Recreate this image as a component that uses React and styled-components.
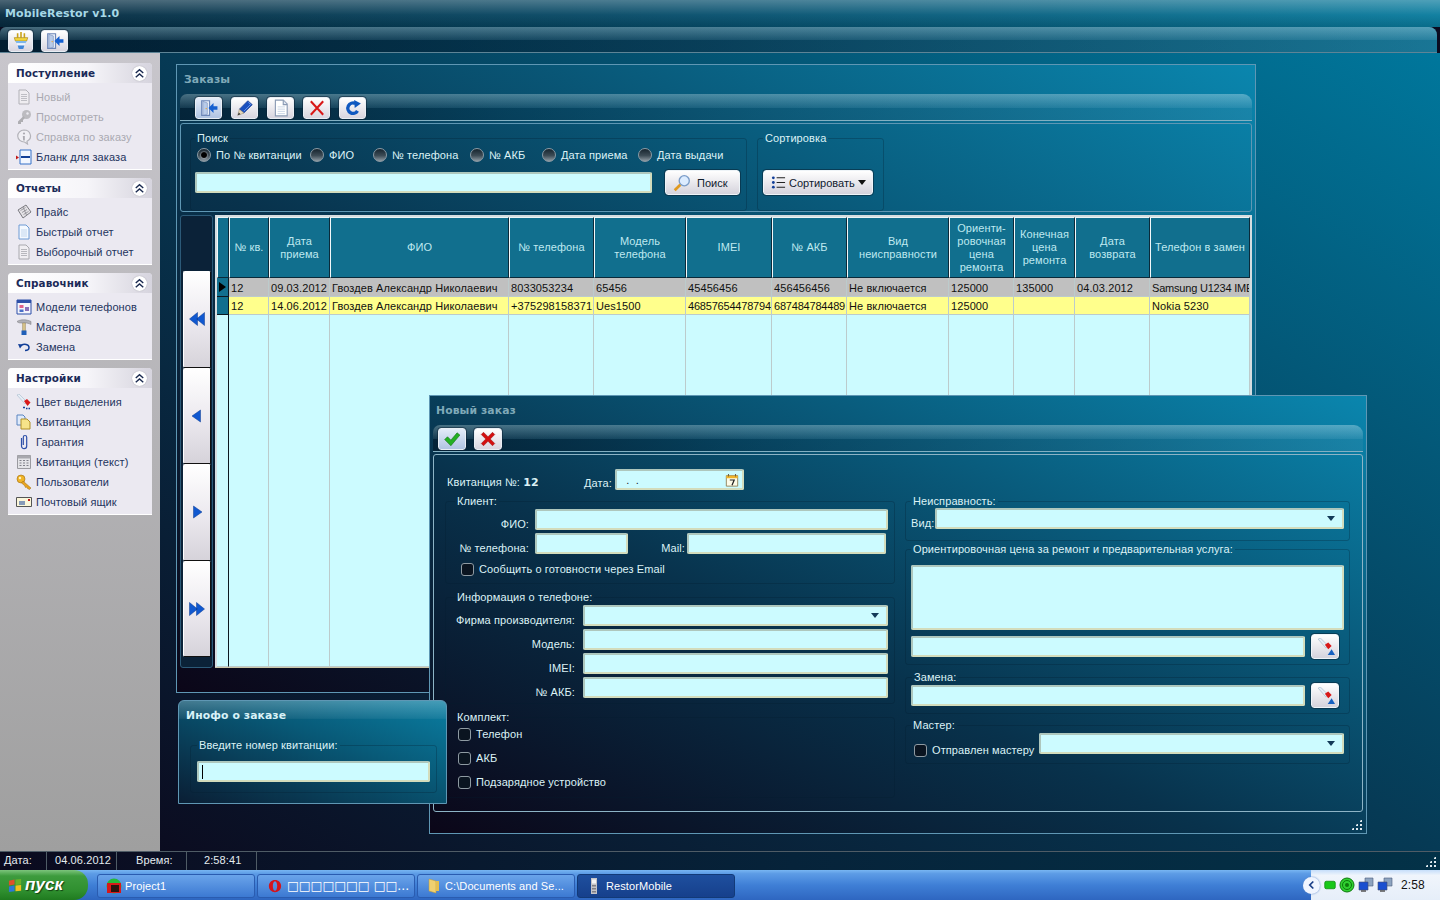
import React from "react";
import styled, { createGlobalStyle } from "styled-components";

const BODY_FONT = `"Liberation Sans", Arial, sans-serif`;
const BOLD_FONT = `"DejaVu Sans", Verdana, sans-serif`;

const GlobalStyle = createGlobalStyle`
  html, body { margin: 0; padding: 0; background: #0b0c20; }
  body { font: 11px/14px ${BODY_FONT}; letter-spacing: 0.1px; }
  * { box-sizing: border-box; }
`;

const glyphs = {
  plug: (
    <>
      <path d="M5 1v4M8 0v5M11 1v4" stroke="#c9a21a" strokeWidth="1.4" />
      <path d="M2 5h12l-1 3H3z" fill="#f2d53c" stroke="#a8861a" strokeWidth=".6" />
      <path d="M3 8h10l-1 2H4z" fill="#7fb6ea" />
      <path d="M4 10h8l-1 2H5z" fill="#eef6ff" />
      <path d="M5 12h6l-1 3H6z" fill="#3f86d8" />
    </>
  ),
  door: (
    <>
      <path d="M1.5 1.5h7v13h-7z" fill="#e8eef8" stroke="#6c86b8" />
      <path d="M2.5 2l4 1.500v10l-4 1z" fill="#b9cbe8" stroke="#6c86b8" strokeWidth=".5" />
      <circle cx="5.500" cy="8.500" r=".6" fill="#f0a020" />
      <path d="M15.500 6.500h-3.500V3.500L7.500 8l4.500 4.500V9.500h3.500z" fill="#1560d0" />
    </>
  ),
  pencil: (
    <>
      <path d="M10.500 1.500l4 3.500-7.500 7.500-4-3.500z" fill="#1a50c0" stroke="#0c2e80" strokeWidth=".5" />
      <path d="M3 9l4 3.500-5.500 2z" fill="#e8d8b8" stroke="#8a7a60" strokeWidth=".4" />
      <path d="M1.500 14.500l1-2.500 1.500 1.500z" fill="#333" />
      <path d="M11 3l2 1.800-6 6" stroke="#7ea6f0" fill="none" strokeWidth=".7" />
    </>
  ),
  page: (
    <>
      <path d="M3 1h7l3.500 3.500V15H3z" fill="#fff" stroke="#8a9ab4" />
      <path d="M10 1v4h3.500" fill="#dfe6f2" stroke="#8a9ab4" />
      <path d="M5 7h6.500M5 9h6.500M5 11h6.500M5 13h6.500" stroke="#c6d2e4" strokeWidth=".8" />
    </>
  ),
  cross: <path d="M2.500 2l11 12M13.500 2l-11 12" stroke="#d81818" strokeWidth="1.800" fill="none" />,
  boldCross: (
    <path d="M2 4l2-2 4 4 4-4 2 2-4 4 4 4-2 2-4-4-4 4-2-2 4-4z" fill="#d40f0f" stroke="#8a0808" strokeWidth=".4" />
  ),
  check: (
    <path d="M1.500 8.500l2.500-2.500 3 3 5.500-6.500 2.500 2-8 9.500z" fill="#23b023" stroke="#0c6a0c" strokeWidth=".5" />
  ),
  refresh: (
    <>
      <path d="M12 10.500A4.600 4.600 0 1 1 10 4" stroke="#0f58c0" strokeWidth="3" fill="none" />
      <path d="M9 .8l6 3.200-5.500 4z" fill="#0f58c0" />
    </>
  ),
  docGray: (
    <>
      <path d="M3 1h7l3 3v11H3z" fill="#f0eef2" stroke="#a8a8ae" />
      <path d="M5 5.500h6M5 7.500h6M5 9.500h6M5 11.500h6" stroke="#a8a8ae" strokeWidth=".8" />
    </>
  ),
  key: (
    <>
      <circle cx="10.500" cy="5.500" r="4.500" fill="#b4b4b8" />
      <circle cx="11.500" cy="4.500" r="1.200" fill="#ecebf1" />
      <path d="M7.500 7L2 12.500V15h3v-2h2v-2l2-2z" fill="#a4a4a8" />
    </>
  ),
  info: (
    <>
      <path d="M8 1a6.500 6 0 0 1 3 11.300L11.500 15 8.500 13A6.500 6 0 1 1 8 1z" fill="#f2f1f5" stroke="#aaaab0" strokeWidth="1.200" />
      <circle cx="8" cy="4.500" r="1.100" fill="#a0a0a6" />
      <path d="M6.800 7h2v4.500h-1.600z" fill="#a0a0a6" />
    </>
  ),
  form: (
    <>
      <path d="M4 1h11v14H4z" fill="#f2f6ff" stroke="#3470c8" />
      <path d="M5 7h9v2H5z" fill="#123f98" />
      <path d="M0 6.500l3 2-3 2z" fill="#c01818" />
    </>
  ),
  price: (
    <>
      <path d="M2 6l8-5 5 7-8 6z" fill="#e4e2e6" stroke="#7a7a80" />
      <path d="M4.500 6.500l5-3M6 8.500l5-3M7.500 10.500l5-3M7 3l3.500 8" stroke="#8a8a90" strokeWidth=".8" />
    </>
  ),
  docBlue: (
    <>
      <path d="M3 1h7l3 3v11H3z" fill="#f4f9ff" stroke="#6c9ad4" />
      <path d="M5 6h6M5 8h6M5 10h6M5 12h6" stroke="#b6cfea" strokeWidth=".8" />
    </>
  ),
  models: (
    <>
      <path d="M1 1h14v14H1z" fill="#f4f4fb" stroke="#2d4fa8" />
      <path d="M1 1h14v3H1z" fill="#2d4fa8" />
      <path d="M3.500 6h4v3h-4z" fill="#e0608a" />
      <path d="M3.500 10.500h4v2.500h-4z" fill="#4a70c8" />
      <path d="M9 8h4v4H9z" fill="#8a70b8" />
    </>
  ),
  hammer: (
    <>
      <path d="M1 2.500c3-2 9-2.500 14 0v3c-2-1-4-1.500-5-1.500H6C4 4 2 4 1 2.500z" fill="#b0b0b6" stroke="#77777d" strokeWidth=".5" />
      <path d="M6.500 4h3v8h-3z" fill="#d4c088" stroke="#8a7a50" strokeWidth=".4" />
      <path d="M5.500 11.500h5V16h-5z" fill="#1f5fb8" />
    </>
  ),
  undo: (
    <>
      <path d="M5 6.500c3-2 8-1.500 8 2 0 2-2 3-4 3" stroke="#123f98" strokeWidth="1.500" fill="none" />
      <path d="M2 5l5 .5L4 9.500z" fill="#123f98" />
    </>
  ),
  brush: (
    <>
      <path d="M1 1l2-1 8 8-2 2z" fill="#e6eef6" stroke="#9ab0c4" strokeWidth=".5" />
      <path d="M8 7l3-2 3.500 3.500-3 3.500z" fill="#d81818" />
      <path d="M7 13.500h2M10 14.500h1.500M12.500 14.500H14" stroke="#123f98" strokeWidth="1.600" />
    </>
  ),
  brushBlue: (
    <>
      <path d="M1 1l2-1 7 7-2 2z" fill="#e6eef6" stroke="#9ab0c4" strokeWidth=".5" />
      <path d="M7 6l3-2 3 3-3 3z" fill="#d81818" />
      <path d="M9.500 15l3.500-5 3 5z" fill="#1560c0" />
    </>
  ),
  copies: (
    <>
      <path d="M1 1h6l2 2v8H1z" fill="#dfeafa" stroke="#5a84c0" />
      <path d="M5 5h6l3 3v7H5z" fill="#f6e48a" stroke="#b09028" />
    </>
  ),
  clip: (
    <path d="M5.500 4v8a2.600 2.600 0 0 0 5.200 0V3.200a1.700 1.700 0 0 0-3.400 0V11" stroke="#2d4fa8" strokeWidth="1.200" fill="none" />
  ),
  keypad: (
    <>
      <path d="M1.500 1.500h13v13h-13z" fill="#e4e4e8" stroke="#9a9aa0" />
      <path d="M1.500 1.500h13v3h-13z" fill="#a8a8ae" />
      <path d="M3.500 6.500h2M7 6.500h2M10.500 6.500h2M3.500 9h2M7 9h2M10.500 9h2M3.500 11.500h2M7 11.500h2M10.500 11.500h2" stroke="#80808a" />
    </>
  ),
  keys: (
    <>
      <circle cx="5" cy="5" r="4" fill="#f0b428" stroke="#a06c10" strokeWidth=".6" />
      <circle cx="4" cy="4" r="1.200" fill="#fff2c0" />
      <path d="M7 7l8 7-1.500 1.500-2-1-1-1.500-1 .5-1-2-3-2.500z" fill="#e8a420" stroke="#a06c10" strokeWidth=".5" />
    </>
  ),
  mail: (
    <>
      <path d="M.5 3.500h15v9H.5z" fill="#fbf6da" stroke="#555" />
      <path d="M3 8h6M3 10h6" stroke="#123f98" />
      <path d="M12 5h2v2h-2z" fill="#c01818" />
    </>
  ),
  first: <path d="M8.500 1.500v13L.5 8zM15.500 1.500v13L7.500 8z" fill="#1058d0" stroke="#0a3a90" strokeWidth=".5" />,
  prev: <path d="M11.500 2v12L3 8z" fill="#1058d0" stroke="#0a3a90" strokeWidth=".5" />,
  next: <path d="M4.500 2v12L13 8z" fill="#1058d0" stroke="#0a3a90" strokeWidth=".5" />,
  last: <path d="M.5 1.500v13L8.500 8zM7.500 1.500v13L15.500 8z" fill="#1058d0" stroke="#0a3a90" strokeWidth=".5" />,
  search: (
    <>
      <circle cx="10" cy="6" r="4.500" fill="#dcecff" stroke="#7a9cc8" strokeWidth="1.200" />
      <path d="M6.500 9.500L1.500 14.500" stroke="#e09a20" strokeWidth="2.400" />
    </>
  ),
  sort: (
    <>
      <path d="M6 3h9M6 8h9M6 13h9" stroke="#222" strokeWidth="1.100" />
      <circle cx="2.500" cy="3" r="1.500" fill="#123f98" />
      <circle cx="2.500" cy="8" r="1.500" fill="#123f98" />
      <circle cx="2.500" cy="13" r="1.500" fill="#123f98" />
    </>
  ),
  collapse: <path d="M4 7.500L8 4l4 3.500M4 12L8 8.500l4 3.500" stroke="#1a2a50" strokeWidth="1.500" fill="none" />,
  calendar: (
    <>
      <path d="M1.500 3h13v12h-13z" fill="#fdfbe8" stroke="#8a7a50" />
      <path d="M1.500 3h13v3h-13z" fill="#f0b428" />
      <path d="M4 1v3M12 1v3" stroke="#706040" strokeWidth="1.200" />
      <path d="M5.500 8h5L8 14" stroke="#222" strokeWidth="1.400" fill="none" />
    </>
  ),
  flag: (
    <>
      <path d="M1 3l6-1.500V7L1 8z" fill="#e0502a" />
      <path d="M8 1.500l6-.5v6l-6 .5z" fill="#6ab02c" />
      <path d="M1 9l6-1v6l-6 1z" fill="#2d78d8" />
      <path d="M8 8l6-.500v6l-6 .5z" fill="#f0c020" />
    </>
  ),
  okBadge: (
    <>
      <circle cx="8" cy="8" r="7.500" fill="#26b83a" />
      <path d="M1 5h14v10H1z" fill="#d81818" />
      <path d="M5 7h8v7H5z" fill="#2a1410" />
    </>
  ),
  opera: (
    <path fillRule="evenodd" d="M8 1c4 0 7 3 7 7s-3 7-7 7-7-3-7-7 3-7 7-7zm0 1.500c-1.500 0-2.500 2.500-2.500 5.500s1 5.500 2.500 5.500 2.500-2.500 2.500-5.500S9.500 2.500 8 2.500z" fill="#d4141c" />
  ),
  folder: (
    <>
      <path d="M3 1l7 2v12l-7-2z" fill="#f0d070" stroke="#c09a30" strokeWidth=".5" />
      <path d="M10 3h3v10h-3z" fill="#e4be50" />
    </>
  ),
  phone: (
    <>
      <path d="M5 0h6v16H5z" fill="#c4c4c8" />
      <path d="M6 1.500h4v4H6z" fill="#f4f4f4" />
      <path d="M6 7h4v1.500H6zM6 10h4v1.500H6zM6 13h4v1.500H6z" fill="#807f84" />
    </>
  ),
  chevron: <path d="M9.500 4L5.500 8l4 4" stroke="#1a3f88" strokeWidth="2" fill="none" />,
  battery: <rect x="1" y="3" width="14" height="10" rx="2" fill="#18c818" stroke="#0c8a0c" />,
  radar: (
    <>
      <circle cx="8" cy="8" r="7" fill="#30d030" stroke="#0c7a0c" />
      <circle cx="8" cy="8" r="4.500" fill="none" stroke="#0c7a0c" />
      <circle cx="8" cy="8" r="2" fill="#0c7a0c" />
    </>
  ),
  network: (
    <>
      <path d="M7 1h8v8H7z" fill="#8ea4c0" stroke="#4a5a78" strokeWidth=".6" />
      <path d="M1 5h9v8H1z" fill="#1a4fd0" stroke="#444e70" strokeWidth=".6" />
      <path d="M3 14h5" stroke="#555" strokeWidth="1.500" />
    </>
  )
};

const IconSvg = styled.svg`
  display: block;
  flex: none;
  width: ${({ $size }) => $size || 16}px;
  height: ${({ $size }) => $size || 16}px;
  opacity: ${({ $faded }) => ($faded ? 0.85 : 1)};
`;

const Icon = ({ name, size, faded }) => (
  <IconSvg viewBox="0 0 16 16" $size={size} $faded={faded} aria-hidden="true">
    {glyphs[name]}
  </IconSvg>
);

const Screen = styled.div`
  width: 1440px;
  height: 900px;
  display: flex;
  flex-direction: column;
  overflow: hidden;
`;

const TitleBar = styled.div`
  height: 27px;
  flex: none;
  padding: 6px 5px 0;
  font: bold 11px/15px ${BOLD_FONT};
  color: #a6d8e6;
  background:
    linear-gradient(180deg, rgba(255, 255, 255, 0.28) 0, rgba(255, 255, 255, 0.04) 55%, rgba(0, 0, 0, 0.12) 100%),
    linear-gradient(90deg, #062a3f 0%, #07506e 50%, #0a7c9e 100%);
`;

const gloss = `
  linear-gradient(180deg, rgba(175, 225, 240, 0.4) 0, rgba(130, 195, 220, 0.14) 52%, rgba(255, 255, 255, 0) 54%),
  linear-gradient(90deg, rgba(0, 20, 36, 0.55) 0%, rgba(0, 30, 50, 0.3) 30%, rgba(60, 140, 170, 0.3) 100%)
`;

const MainToolbar = styled.div`
  height: 26px;
  flex: none;
  margin-right: 3px;
  padding: 3px 0 0 8px;
  display: flex;
  gap: 8px;
  border-radius: 6px 8px 0 0;
  border-bottom: 1px solid #5e8496;
  background: ${gloss}, linear-gradient(90deg, #04283e 0%, #05405c 50%, #0a6c8c 100%);
`;

const Workspace = styled.div`
  flex: 1;
  min-height: 0;
  display: flex;
`;

const Sidebar = styled.nav`
  width: 160px;
  flex: none;
  padding: 10px 8px;
  display: flex;
  flex-direction: column;
  gap: 8px;
  background: linear-gradient(180deg, #c8c6cc 0%, #9f9f9f 100%);
`;

const SidePanel = styled.section`
  background: #ebe9f1;
  border-bottom: 1px solid #fff;
  border-radius: 4px 4px 0 0;
  padding-bottom: 2px;
`;

const SideHead = styled.header`
  height: 20px;
  padding: 0 5px 0 8px;
  display: flex;
  align-items: center;
  justify-content: space-between;
  font: bold 10.4px/15px ${BOLD_FONT};
  color: #1b2a58;
  border-radius: 4px 4px 0 0;
  background: linear-gradient(90deg, #fff 0%, #f6f5f9 55%, #d6d4de 100%);
`;

const CollapseDot = styled.span`
  width: 15px;
  height: 15px;
  border-radius: 50%;
  background: #fff;
  box-shadow: 0 0 1px #8a8a96;
`;

const SideList = styled.ul`
  list-style: none;
  margin: 0;
  padding: 4px 0 0 8px;
`;

const SideItem = styled.li`
  height: 20px;
  display: flex;
  align-items: center;
  gap: 4px;
  color: ${({ $off }) => ($off ? "#aaa9b2" : "#24345e")};
`;

const Desk = styled.main`
  flex: 1;
  position: relative;
  background: linear-gradient(to top right, #0b0c20 0%, #063a55 50%, #00779c 100%);
`;

const windowBg = `linear-gradient(to top right, #0b0618 0%, #08324c 42%, #0a86ae 100%)`;

const Win = styled.section`
  position: absolute;
  left: ${({ $x }) => $x}px;
  top: ${({ $y }) => $y}px;
  width: ${({ $w }) => $w}px;
  height: ${({ $h }) => $h}px;
  z-index: ${({ $z }) => $z || 1};
  display: flex;
  flex-direction: column;
  border: 1px solid #5f97b4;
  color: #dcf2f6;
  background: ${windowBg};
`;

const WinTitle = styled.h2`
  margin: 0;
  height: 29px;
  flex: none;
  padding: 8px 7px 0 ${({ $pl }) => $pl ?? 7}px;
  font: bold 10.8px/14px ${BOLD_FONT};
  color: #7fa9b8;
`;

const WinBar = styled.div`
  height: 27px;
  flex: none;
  margin: 0 3px;
  padding: 3px 0 0 ${({ $pad }) => $pad}px;
  display: flex;
  gap: ${({ $gap }) => $gap}px;
  border-radius: 7px 9px 0 0;
  border-bottom: 1px solid #83b0c2;
  background: ${gloss};
`;

const ToolButton = styled.button`
  width: ${({ $w }) => $w || 27}px;
  height: 22px;
  padding: 0;
  display: flex;
  align-items: center;
  justify-content: center;
  border: 1px solid #e8eef4;
  border-radius: 3px;
  outline: 1px solid rgba(10, 30, 50, 0.5);
  background: ${({ $active }) =>
    $active
      ? "linear-gradient(180deg, #e4ecf8, #b0c4e2)"
      : "linear-gradient(180deg, #fff, #d8d5df)"};
`;

const SearchPanel = styled.div`
  height: 89px;
  flex: none;
  margin: 2px 3px 0;
  padding: 7px 0 0 9px;
  display: flex;
  gap: 10px;
  border: 1px solid #5f97b4;
  border-radius: 3px;
`;

const Group = styled.fieldset`
  margin: ${({ $mt }) => $mt || 0}px 0 0 ${({ $ml }) => $ml || 0}px;
  padding: 0 6px ${({ $pb }) => $pb || 0}px ${({ $pl }) => $pl ?? 5}px;
  min-width: 0;
  width: ${({ $w }) => ($w ? `${$w}px` : "auto")};
  flex: none;
  border: 1px solid rgba(3, 30, 48, 0.28);
  border-radius: 3px;
`;

const Legend = styled.legend`
  margin-left: ${({ $ml }) => $ml || 0}px;
  padding: 0 2px;
  line-height: 14px;
  color: #dcf2f6;
`;

const RadioRow = styled.div`
  height: 17px;
  margin: 1px 0 0 2px;
  display: flex;
  align-items: center;
`;

const RadioItem = styled.label`
  width: ${({ $w }) => $w}px;
  display: flex;
  align-items: center;
  gap: 5px;
  flex: none;
  white-space: nowrap;
`;

const RadioDot = styled.span`
  width: 14px;
  height: 14px;
  flex: none;
  border-radius: 50%;
  display: flex;
  align-items: center;
  justify-content: center;
  border: 1px solid #8b9aa4;
  background: linear-gradient(180deg, #16242e 0%, #3d4c56 55%, #8e9aa2 100%);

  &::after {
    content: "";
    width: ${({ $on }) => ($on ? 6 : 0)}px;
    height: ${({ $on }) => ($on ? 6 : 0)}px;
    border-radius: 50%;
    background: #000;
    box-shadow: 0 0 2px #fff;
  }
`;

const Field = styled.div`
  width: ${({ $w }) => ($w ? `${$w}px` : "auto")};
  height: ${({ $h }) => $h || 21}px;
  flex: none;
  display: flex;
  align-items: center;
  justify-content: space-between;
  padding: 0 3px;
  color: #123;
  background: #ccfbff;
  border: 2px solid;
  border-color: #aec7bd #d3dcbc #d3dcbc #aec7bd;
  border-radius: 2px;
`;

const DropArrow = styled.span`
  margin-left: auto;
  margin-right: 4px;
  width: 0;
  height: 0;
  border: 4px solid transparent;
  border-top: 5px solid #123a58;
  border-bottom: 0;
`;

const SearchRow = styled.div`
  margin-top: 7px;
  display: flex;
  align-items: center;
  gap: 13px;
`;

const PlainButton = styled.button`
  width: ${({ $w }) => $w}px;
  height: 25px;
  flex: none;
  padding: 0 0 0 ${({ $pl }) => $pl ?? 7}px;
  display: flex;
  align-items: center;
  gap: ${({ $gap }) => $gap}px;
  font: 11px/14px ${BODY_FONT};
  color: #10202e;
  border: 1px solid #eef4f8;
  border-radius: 3px;
  outline: 1px solid rgba(8, 40, 60, 0.6);
  background: linear-gradient(180deg, #fff, #d5d3dc);
`;

const MenuCaret = styled.span`
  width: 0;
  height: 0;
  border: 4px solid transparent;
  border-top: 5px solid #111;
  border-bottom: 0;
`;

const ListArea = styled.div`
  height: 453px;
  flex: none;
  margin: 3px 3px 0;
  display: flex;
  gap: 2px;
`;

const NavColumn = styled.div`
  width: 33px;
  flex: none;
  padding: 55px 0 0 2px;
  border: 1px solid #2c5a78;
  border-radius: 3px;
  background: #0b2238;
`;

const NavButton = styled.button`
  width: 28px;
  height: 96.5px;
  padding: 0;
  display: flex;
  align-items: center;
  justify-content: center;
  border: 1px solid #fff;
  border-right-color: #111;
  border-bottom-color: #111;
  border-radius: 2px;
  background: linear-gradient(180deg, #fff 0%, #ebe8ee 55%, #d6d3da 100%);
`;

const DataGrid = styled.div`
  width: 1037px;
  flex: none;
  padding: 2px 2px 0 2px;
  display: grid;
  grid-template-columns: 12px 40px 61px 179px 85px 92px 86px 75px 102px 65px 61px 75px 100px;
  grid-template-rows: 61px 19px 18px 1fr;
  background: #d6dde0;
  border-bottom: 1px solid #ccc6a8;
`;

const HeadCell = styled.div`
  display: flex;
  align-items: center;
  justify-content: center;
  text-align: center;
  line-height: 13px;
  overflow: hidden;
  color: #bfe9f0;
  background: #116f8e;
  border: 1px solid #0a2a3a;
  border-top-color: #eaf4f6;
  border-left-color: #f2f8fa;
`;

const rowColors = { gray: "#c0c0c0", yellow: "#ffff8c", empty: "#ccfbff" };

const Cell = styled.div`
  padding: ${({ $tone }) => ($tone === "gray" ? 3 : 2)}px 0 0 2px;
  white-space: nowrap;
  overflow: hidden;
  line-height: 14px;
  letter-spacing: ${({ $tight }) => ($tight ? "-0.2px" : "0.1px")};
  color: #111;
  background: ${({ $tone }) => rowColors[$tone]};
  border-right: 1px solid ${({ $strong }) => ($strong ? "#0c1820" : "#bccbcc")};
  border-bottom: 1px solid #bccbcc;
`;

const Marker = styled.div`
  display: flex;
  align-items: center;
  background: #116f8e;
  border-right: 1px solid #0c1820;
  border-bottom: 1px solid #0c1820;

  &::before {
    content: "";
    border: ${({ $on }) => ($on ? "5px" : "0")} solid transparent;
    border-left: ${({ $on }) => ($on ? "7px solid #000" : "0")};
    border-right: 0;
    margin-left: 2px;
  }
`;

const FormBody = styled.div`
  flex: 1;
  min-height: 0;
  margin: 2px 3px 0;
  padding: 14px 11px 0;
  display: flex;
  gap: 10px;
  border: 1px solid #8db4c6;
  border-radius: 3px;
`;

const FormColumn = styled.div`
  width: ${({ $w }) => $w}px;
  flex: none;
  padding-top: ${({ $top }) => $top || 0}px;
`;

const TopRow = styled.div`
  height: 21px;
  display: flex;
  align-items: flex-end;
`;

const TopLabel = styled.span`
  width: ${({ $w }) => $w}px;
  flex: none;
  padding-left: ${({ $pl }) => $pl || 0}px;
  white-space: nowrap;
`;

const ReceiptNumber = styled.b`
  font: bold 11px/14px ${BOLD_FONT};
  color: #dcf2f6;
`;

const FormRow = styled.div`
  margin-top: ${({ $mt }) => $mt || 0}px;
  height: ${({ $h }) => $h || 21}px;
  display: flex;
  align-items: ${({ $align }) => $align || "stretch"};
  gap: ${({ $gap }) => $gap || 0}px;
`;

const RowLabel = styled.span`
  width: ${({ $w }) => $w}px;
  flex: none;
  align-self: flex-end;
  margin-bottom: -1px;
  text-align: right;
  padding-right: ${({ $pr }) => $pr || 0}px;
  white-space: nowrap;
`;

const CheckRow = styled.label`
  margin: ${({ $mt }) => $mt || 0}px 0 0 ${({ $ml }) => $ml || 0}px;
  width: ${({ $w }) => ($w ? `${$w}px` : "auto")};
  flex: none;
  align-self: flex-end;
  height: 14px;
  display: flex;
  align-items: center;
  gap: 5px;
  white-space: nowrap;
`;

const CheckBox = styled.span`
  width: 13px;
  height: 13px;
  flex: none;
  border: 1px solid #8e9aa2;
  border-radius: 3px;
  background: #0a1420;
`;

const Grip = styled.div`
  margin-left: auto;
  width: 11px;
  height: 11px;
  background-image: radial-gradient(circle, #dfe9ee 1px, transparent 1.3px);
  background-size: 4px 4px;
  clip-path: polygon(100% 0, 100% 100%, 0 100%);
`;

const WinFoot = styled.div`
  height: ${({ $h }) => ($h ? `${$h}px` : "auto")};
  flex: ${({ $h }) => ($h ? "none" : "1")};
  display: flex;
  align-items: flex-end;
  padding: 0 4px 3px 0;
`;

const InfoWin = styled(Win)`
  border-radius: 6px 6px 0 0;
  background:
    linear-gradient(180deg, rgba(255, 255, 255, 0.24) 0, rgba(255, 255, 255, 0.06) 17%, transparent 18%),
    linear-gradient(to top right, #0a1e34 0%, #085a78 60%, #0a7ea2 100%);
`;

const InfoTitle = styled(WinTitle)`
  color: #d8f2f8;
`;

const Caret = styled.span`
  width: 1px;
  height: 14px;
  background: #000;
`;

const StatusBar = styled.footer`
  height: 19px;
  flex: none;
  display: flex;
  color: #e4ecf0;
  border-top: 1px solid #4f5c66;
  background: linear-gradient(90deg, #0b0a1e 0%, #06233a 55%, #033248 100%);
`;

const StatusCell = styled.div`
  width: ${({ $w }) => $w}px;
  flex: none;
  padding: 1px 0 0 ${({ $pl }) => $pl}px;
  border-right: 1px solid #4f5c66;
`;

const TaskBar = styled.div`
  height: 30px;
  flex: none;
  display: flex;
  color: #fff;
  background: linear-gradient(180deg, #78b6f2 0%, #5d9ce6 12%, #3f7fd6 50%, #2e66c0 100%);
`;

const StartButton = styled.div`
  width: 88px;
  flex: none;
  display: flex;
  align-items: center;
  gap: 2px;
  padding-left: 8px;
  margin-right: 9px;
  font: italic bold 17px/20px ${BODY_FONT};
  color: #fff;
  text-shadow: 1px 1px 1px #123f12;
  border-radius: 0 14px 14px 0;
  background: linear-gradient(180deg, #7cc47c 0%, #3d9b3d 20%, #2f8f2f 70%, #1f7a1f 100%);
`;

const TaskList = styled.div`
  display: flex;
  gap: 2px;
  padding-top: 4px;
`;

const TaskButton = styled.div`
  width: 158px;
  height: 24px;
  flex: none;
  display: flex;
  align-items: center;
  gap: ${({ $gap }) => $gap || 3}px;
  padding-left: ${({ $pl }) => $pl || 8}px;
  white-space: nowrap;
  overflow: hidden;
  border: 1px solid ${({ $on }) => ($on ? "#123a78" : "#2a5cb0")};
  border-radius: 3px;
  background: ${({ $on }) =>
    $on
      ? "linear-gradient(180deg, #1e4f9e, #16408c)"
      : "linear-gradient(180deg, #6aa4ea, #3c79d2)"};
`;

const TofuText = styled.span`
  font: 12.5px/16px ${BOLD_FONT};
  letter-spacing: 0;
`;

const Tray = styled.div`
  margin-left: auto;
  width: 129px;
  display: flex;
  align-items: center;
  gap: 3px;
  color: #111;
  background: linear-gradient(180deg, #c6defa 0%, #f0f5fc 18%, #e6eef9 100%);
`;

const TrayChevron = styled.span`
  width: 17px;
  height: 17px;
  margin-left: -8px;
  margin-right: 1px;
  border-radius: 50%;
  display: flex;
  align-items: center;
  justify-content: center;
  background: #f0f5ff;
  box-shadow: 0 0 2px #5a86c8;
`;

const Clock = styled.span`
  margin-left: 5px;
  font-size: 12px;
`;

const sideGroups = [
  {
    title: "Поступление",
    items: [
      ["docGray", "Новый", true],
      ["key", "Просмотреть", true],
      ["info", "Справка по заказу", true],
      ["form", "Бланк для заказа"]
    ]
  },
  {
    title: "Отчеты",
    items: [
      ["price", "Прайс"],
      ["docBlue", "Быстрый отчет"],
      ["docGray", "Выборочный отчет"]
    ]
  },
  {
    title: "Справочник",
    items: [
      ["models", "Модели телефонов"],
      ["hammer", "Мастера"],
      ["undo", "Замена"]
    ]
  },
  {
    title: "Настройки",
    items: [
      ["brush", "Цвет выделения"],
      ["copies", "Квитанция"],
      ["clip", "Гарантия"],
      ["keypad", "Квитанция (текст)"],
      ["keys", "Пользователи"],
      ["mail", "Почтовый ящик"]
    ]
  }
];

const radios = [
  ["По № квитанции", 113, true],
  ["ФИО", 63],
  ["№ телефона", 97],
  ["№ АКБ", 72],
  ["Дата приема", 96],
  ["Дата выдачи", 100]
];

const headers = [
  "№ кв.",
  "Дата приема",
  "ФИО",
  "№ телефона",
  "Модель телефона",
  "IMEI",
  "№ АКБ",
  "Вид неисправности",
  "Ориенти-ровочная цена ремонта",
  "Конечная цена ремонта",
  "Дата возврата",
  "Телефон в замен"
];

const rows = [
  {
    tone: "gray",
    current: true,
    cells: ["12", "09.03.2012", "Гвоздев Александр Николаевич", "8033053234", "65456", "45456456", "456456456", "Не включается", "125000", "135000", "04.03.2012", "Samsung U1234 IME"]
  },
  {
    tone: "yellow",
    cells: ["12", "14.06.2012", "Гвоздев Александр Николаевич", "+375298158371", "Ues1500", "46857654478794", "687484784489", "Не включается", "125000", "", "", "Nokia 5230"]
  }
];

const isTight = text => /^\d{12,}$/.test(text) || text.startsWith("Samsung");

const SideGroup = ({ title, items }) => (
  <SidePanel>
    <SideHead>
      {title}
      <CollapseDot>
        <Icon name="collapse" size={15} />
      </CollapseDot>
    </SideHead>
    <SideList>
      {items.map(([icon, label, off]) => (
        <SideItem key={label} $off={off}>
          <Icon name={icon} faded={off} />
          {label}
        </SideItem>
      ))}
    </SideList>
  </SidePanel>
);

const Check = ({ children, ...rest }) => (
  <CheckRow {...rest}>
    <CheckBox />
    {children}
  </CheckRow>
);

const OrdersWindow = () => (
  <Win $x={16} $y={11} $w={1080} $h={629}>
    <WinTitle>Заказы</WinTitle>
    <WinBar $pad={15} $gap={9}>
      <ToolButton $active><Icon name="door" size={18} /></ToolButton>
      <ToolButton><Icon name="pencil" size={18} /></ToolButton>
      <ToolButton><Icon name="page" size={18} /></ToolButton>
      <ToolButton><Icon name="cross" size={18} /></ToolButton>
      <ToolButton><Icon name="refresh" size={18} /></ToolButton>
    </WinBar>
    <SearchPanel>
      <Group $w={557} $pl={4}>
        <Legend>Поиск</Legend>
        <RadioRow>
          {radios.map(([label, w, on]) => (
            <RadioItem key={label} $w={w}>
              <RadioDot $on={on} />
              {label}
            </RadioItem>
          ))}
        </RadioRow>
        <SearchRow>
          <Field $w={457} />
          <PlainButton $w={75} $gap={6}>
            <Icon name="search" size={18} />
            Поиск
          </PlainButton>
        </SearchRow>
      </Group>
      <Group $w={127}>
        <Legend>Сортировка</Legend>
        <FormRow $h={25} />
        <PlainButton $w={110} $gap={3}>
          <Icon name="sort" size={15} />
          Сортировать
          <MenuCaret />
        </PlainButton>
      </Group>
    </SearchPanel>
    <ListArea>
      <NavColumn>
        {["first", "prev", "next", "last"].map(name => (
          <NavButton key={name}><Icon name={name} size={16} /></NavButton>
        ))}
      </NavColumn>
      <DataGrid>
        <HeadCell />
        {headers.map(title => <HeadCell key={title}>{title}</HeadCell>)}
        {rows.map(row => (
          <React.Fragment key={row.tone}>
            <Marker $on={row.current} />
            {row.cells.map((text, i) => (
              <Cell key={i} $tone={row.tone} $tight={isTight(text)}>{text}</Cell>
            ))}
          </React.Fragment>
        ))}
        <Cell $tone="empty" $strong />
        {headers.map(title => <Cell key={title} $tone="empty" />)}
      </DataGrid>
    </ListArea>
  </Win>
);

const NewOrderWindow = () => (
  <Win $x={269} $y={342} $w={938} $h={439} $z={2}>
    <WinTitle $pl={6}>Новый заказ</WinTitle>
    <WinBar $pad={5} $gap={8}>
      <ToolButton $active $w={28}><Icon name="check" size={18} /></ToolButton>
      <ToolButton $w={28}><Icon name="boldCross" size={18} /></ToolButton>
    </WinBar>
    <FormBody>
      <FormColumn $w={450}>
        <TopRow>
          <TopLabel $w={139} $pl={2}>Квитанция №: <ReceiptNumber>12</ReceiptNumber></TopLabel>
          <TopLabel $w={31}>Дата:</TopLabel>
          <Field $w={129}>
            &nbsp;&nbsp;.&nbsp;&nbsp;.
            <Icon name="calendar" size={14} />
          </Field>
        </TopRow>
        <Group $mt={4} $pl={0} $pb={7}>
          <Legend $ml={9}>Клиент:</Legend>
          <FormRow $mt={1}>
            <RowLabel $w={89} $pr={6}>ФИО:</RowLabel>
            <Field $w={353} />
          </FormRow>
          <FormRow $mt={3}>
            <RowLabel $w={89} $pr={6}>№ телефона:</RowLabel>
            <Field $w={93} />
            <RowLabel $w={59} $pr={2}>Mail:</RowLabel>
            <Field $w={199} />
          </FormRow>
          <Check $mt={8} $ml={15}>Сообщить о готовности через Email</Check>
        </Group>
        <Group $mt={6} $pl={0} $pb={5}>
          <Legend $ml={9}>Информация о телефоне:</Legend>
          <FormRow $mt={1}>
            <RowLabel $w={137} $pr={8}>Фирма производителя:</RowLabel>
            <Field $w={305}><DropArrow /></Field>
          </FormRow>
          {["Модель:", "IMEI:", "№ АКБ:"].map(label => (
            <FormRow key={label} $mt={3}>
              <RowLabel $w={137} $pr={8}>{label}</RowLabel>
              <Field $w={305} />
            </FormRow>
          ))}
        </Group>
        <Group $mt={6} $pl={12} $pb={8}>
          <Legend $ml={-3}>Комплект:</Legend>
          <Check $mt={3}>Телефон</Check>
          <Check $mt={10}>АКБ</Check>
          <Check $mt={10}>Подзарядное устройство</Check>
        </Group>
      </FormColumn>
      <FormColumn $w={445} $top={25}>
        <Group $pb={11}>
          <Legend>Неисправность:</Legend>
          <FormRow>
            <RowLabel $w={24} $pr={2}>Вид:</RowLabel>
            <Field $w={409}><DropArrow /></Field>
          </FormRow>
        </Group>
        <Group $mt={1} $pb={5}>
          <Legend>Ориентировочная цена за ремонт и предварительная услуга:</Legend>
          <FormRow $mt={9} $h={65}>
            <Field $w={433} $h={65} />
          </FormRow>
          <FormRow $mt={4} $h={25} $align="center" $gap={6}>
            <Field $w={394} />
            <PlainButton $w={28} $gap={0} $pl={5}><Icon name="brushBlue" size={18} /></PlainButton>
          </FormRow>
        </Group>
        <Group $mt={5} $pb={5}>
          <Legend $ml={1}>Замена:</Legend>
          <FormRow $mt={-1} $h={25} $align="center" $gap={6}>
            <Field $w={394} />
            <PlainButton $w={28} $gap={0} $pl={5}><Icon name="brushBlue" size={18} /></PlainButton>
          </FormRow>
        </Group>
        <Group $mt={4} $pb={6}>
          <Legend>Мастер:</Legend>
          <FormRow $mt={1} $h={24}>
            <Check $ml={3} $w={125}>Отправлен мастеру</Check>
            <Field $w={305}><DropArrow /></Field>
          </FormRow>
        </Group>
      </FormColumn>
    </FormBody>
    <WinFoot $h={21}>
      <Grip />
    </WinFoot>
  </Win>
);

const InfoWindow = () => (
  <InfoWin $x={18} $y={647} $w={269} $h={104} $z={3}>
    <InfoTitle>Инофо о заказе</InfoTitle>
    <Group $mt={8} $ml={11} $w={247} $pl={6} $pb={10}>
      <Legend>Введите номер квитанции:</Legend>
      <FormRow $mt={9}>
        <Field $w={233}>
          <Caret />
        </Field>
      </FormRow>
    </Group>
  </InfoWin>
);

const App = () => (
  <Screen>
    <GlobalStyle />
    <TitleBar>MobileRestor v1.0</TitleBar>
    <MainToolbar>
      <ToolButton $w={25}><Icon name="plug" size={18} /></ToolButton>
      <ToolButton><Icon name="door" size={18} /></ToolButton>
    </MainToolbar>
    <Workspace>
      <Sidebar>
        {sideGroups.map(group => <SideGroup key={group.title} {...group} />)}
      </Sidebar>
      <Desk>
        <OrdersWindow />
        <NewOrderWindow />
        <InfoWindow />
      </Desk>
    </Workspace>
    <StatusBar>
      <StatusCell $w={47} $pl={4}>Дата:</StatusCell>
      <StatusCell $w={70} $pl={8}>04.06.2012</StatusCell>
      <StatusCell $w={70} $pl={19}>Время:</StatusCell>
      <StatusCell $w={70} $pl={17}>2:58:41</StatusCell>
      <WinFoot><Grip /></WinFoot>
    </StatusBar>
    <TaskBar>
      <StartButton>
        <Icon name="flag" size={15} />
        пуск
      </StartButton>
      <TaskList>
        <TaskButton $pl={8}><Icon name="okBadge" size={16} />Project1</TaskButton>
        <TaskButton $pl={10} $gap={5}><Icon name="opera" size={14} /><TofuText>□□□□□□□ □□...</TofuText></TaskButton>
        <TaskButton $gap={3}><Icon name="folder" size={16} />C:\Documents and Se...</TaskButton>
        <TaskButton $on $pl={8} $gap={4}><Icon name="phone" size={16} />RestorMobile</TaskButton>
      </TaskList>
      <Tray>
        <TrayChevron><Icon name="chevron" size={14} /></TrayChevron>
        <Icon name="battery" size={12} />
        <Icon name="radar" size={16} />
        <Icon name="network" size={16} />
        <Icon name="network" size={16} />
        <Clock>2:58</Clock>
      </Tray>
    </TaskBar>
  </Screen>
);

export default App;
